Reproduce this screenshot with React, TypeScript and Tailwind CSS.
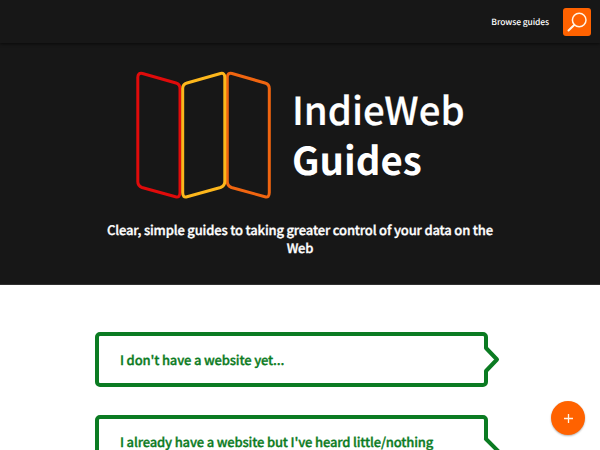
function SearchIcon() {
  return (
    <svg width="20" height="20" viewBox="0 0 20 20" fill="none" stroke="#fff4e6" strokeWidth="1.5" strokeLinecap="round">
      <circle cx="12.2" cy="8" r="6.8" />
      <path d="M7.2 13 1.5 18.5" strokeWidth="2" />
    </svg>
  );
}

function Logo() {
  return (
    <svg className="shrink-0" width="135" height="128" viewBox="0 0 135 128" fill="none" strokeWidth="3" strokeLinejoin="round">
      <path stroke="#e00b0b" d="M6.5 2.500 40 12Q44 13.200 44 17.500V121.500Q44 127 39.500 125.800L6 116.500Q1.800 115 1.800 110.500V6.500Q1.800 1.500 6.500 2.500Z" />
      <path stroke="#f06510" d="M96 2.500 129 12Q133.300 13.200 133.300 17.500V121.500Q133.300 127 129 125.800L95.500 116.500Q91.300 115 91.300 110.500V6.500Q91.300 1.500 96 2.500Z" />
      <path stroke="#fdb71c" d="M84.500 2.500 51 12Q46.700 13.200 46.700 17.500V121.500Q46.700 127 51 125.800L84.500 116.500Q88.800 115 88.800 110.500V6.500Q88.800 1.500 84.500 2.500Z" />
    </svg>
  );
}

export default function App() {
  return (
    <div className="relative flex h-[450px] w-[600px] flex-col overflow-hidden bg-white font-['Noto_Sans_CJK_SC','Noto_Sans',sans-serif] [text-rendering:geometricPrecision]">
      <header className="z-10 flex h-[43px] shrink-0 items-center justify-end gap-[14px] bg-[#171717] pr-[9px] shadow-[0_1px_3px_rgba(0,0,0,0.6)]">
        <a className="pt-[2px] text-[8.5px] leading-none font-medium tracking-[-0.1px] whitespace-nowrap text-white">Browse guides</a>
        <button className="flex h-7 w-7 items-center justify-center rounded-[3px] bg-[#ff6200]" aria-label="Search">
          <SearchIcon />
        </button>
      </header>
      <section className="flex h-[242px] shrink-0 flex-col items-center border-b border-[#303030] bg-[#171717] pt-[28px] text-white">
        <div className="flex w-[328px] gap-[21px]">
          <Logo />
          <h1 className="pt-[13px] text-[38.4px] leading-[50px] whitespace-nowrap">
            <span className="block font-medium [-webkit-text-stroke:0.2px_white]">IndieWeb</span>
            <span className="block font-bold">Guides</span>
          </h1>
        </div>
        <p className="mt-[22px] text-center text-[13px] leading-[18px] font-medium tracking-[-0.165px] whitespace-nowrap [-webkit-text-stroke:0.35px_white]">
          Clear, simple guides to taking greater control of your data on the
          <br />
          Web
        </p>
      </section>
      <main className="flex flex-col gap-[28px] pt-[47px] pl-[95px] text-[13px] leading-[24px] font-medium tracking-[-0.16px] text-[#0b7b22] [-webkit-text-stroke:0.35px_#0b7b22]">
        <a className="relative flex h-[55px] w-[393px] items-center rounded-[5px] border-4 border-[#0b7b22] pl-[21px] whitespace-nowrap">
          I don't have a website yet...
          <svg className="absolute top-[9px] left-[384px]" width="18" height="30" viewBox="0 0 18 30">
            <path d="M3 3 14 14.500 3 26Z" fill="#fff" />
            <path d="M-1 3H3V26H-1Z" fill="#fff" />
            <path d="M3 3 14 14.500 3 26" fill="none" stroke="#0b7b22" strokeWidth="4" strokeLinejoin="round" strokeLinecap="round" />
          </svg>
        </a>
        <a className="relative flex h-[79px] w-[393px] rounded-[5px] border-4 border-[#0b7b22] pt-[11px] pl-[21px] whitespace-nowrap">
          I already have a website but I've heard little/nothing
          <svg className="absolute top-[17px] left-[384px]" width="24" height="40" viewBox="0 0 24 40">
            <path d="M-1 3H3L19 19 3 35H-1Z" fill="#fff" />
            <path d="M3 3 19 19 3 35" fill="none" stroke="#0b7b22" strokeWidth="4" strokeLinejoin="round" strokeLinecap="round" />
          </svg>
        </a>
      </main>
      <button className="absolute top-[401px] left-[551px] flex h-[34px] w-[34px] items-center justify-center rounded-full bg-[#ff6200] shadow-[0_1px_2px_rgba(0,0,0,0.3)]" aria-label="Add">
        <svg width="9" height="9" viewBox="0 0 9 9" stroke="#fff4e6" strokeWidth="1.3">
          <path d="M4.500 0V9M0 4.500H9" />
        </svg>
      </button>
    </div>
  );
}
